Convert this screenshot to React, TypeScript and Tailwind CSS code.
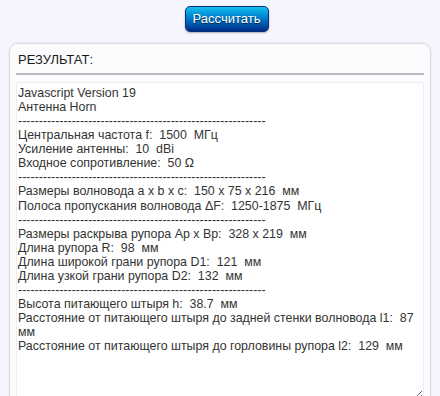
import { useState } from "react";

const RESULT = [
  "Javascript Version 19",
  "Антенна Horn",
  "------------------------------------------------------------",
  "Центральная частота f:  1500  МГц",
  "Усиление антенны:  10  dBi",
  "Входное сопротивление:  50 Ω",
  "------------------------------------------------------------",
  "Размеры волновода a x b x c:  150 x 75 x 216  мм",
  "Полоса пропускания волновода ΔF:  1250-1875  МГц",
  "------------------------------------------------------------",
  "Размеры раскрыва рупора Ap x Bp:  328 x 219  мм",
  "Длина рупора R:  98  мм",
  "Длина широкой грани рупора D1:  121  мм",
  "Длина узкой грани рупора D2:  132  мм",
  "------------------------------------------------------------",
  "Высота питающего штыря h:  38.7  мм",
  "Расстояние от питающего штыря до задней стенки волновода l1:  87  мм",
  "Расстояние от питающего штыря до горловины рупора l2:  129  мм",
].join("\n");

export default function App() {
  const [text] = useState(RESULT);

  return (
    <div className="min-h-[396px] bg-[#f5f5fd] font-['Liberation_Sans',Arial,sans-serif] text-[#222]">
      {/* Calculate button */}
      <div className="flex justify-center pt-[6px] pl-[13px]">
        <button className="h-[26px] w-[84px] rounded-[5px] border border-[#0a2f7a] bg-gradient-to-b from-[#17c0f0] via-[#0077c8] to-[#002a86] text-[13px] text-white [text-shadow:0_1px_1px_rgba(0,0,0,0.6)] shadow-[0_1px_2px_rgba(0,0,0,0.3)]">
          Рассчитать
        </button>
      </div>

      {/* Result card */}
      <div className="mx-[9px] mt-[11px] rounded-t-[9px] border border-b-0 border-[#dcdce6] bg-[#fcfcff] px-[6px] pt-[8px] shadow-[0_0_3px_rgba(0,0,0,0.08)]">
        <div className="px-[2px] text-[13px] leading-[15px] text-[#1a1a1a]">РЕЗУЛЬТАТ:</div>
        <div className="mt-[6px] h-[2px] bg-[#b8b8c0]" />
        <textarea
          readOnly
          value={text}
          className="mt-[7px] block h-[318px] w-full resize rounded-[2px] border border-[#ececf2] bg-white px-[1px] pt-[3px] font-['Liberation_Sans',Arial,sans-serif] text-[12.4px] leading-[14.06px] text-[#333] outline-none whitespace-pre-wrap"
        />
      </div>
    </div>
  );
}
